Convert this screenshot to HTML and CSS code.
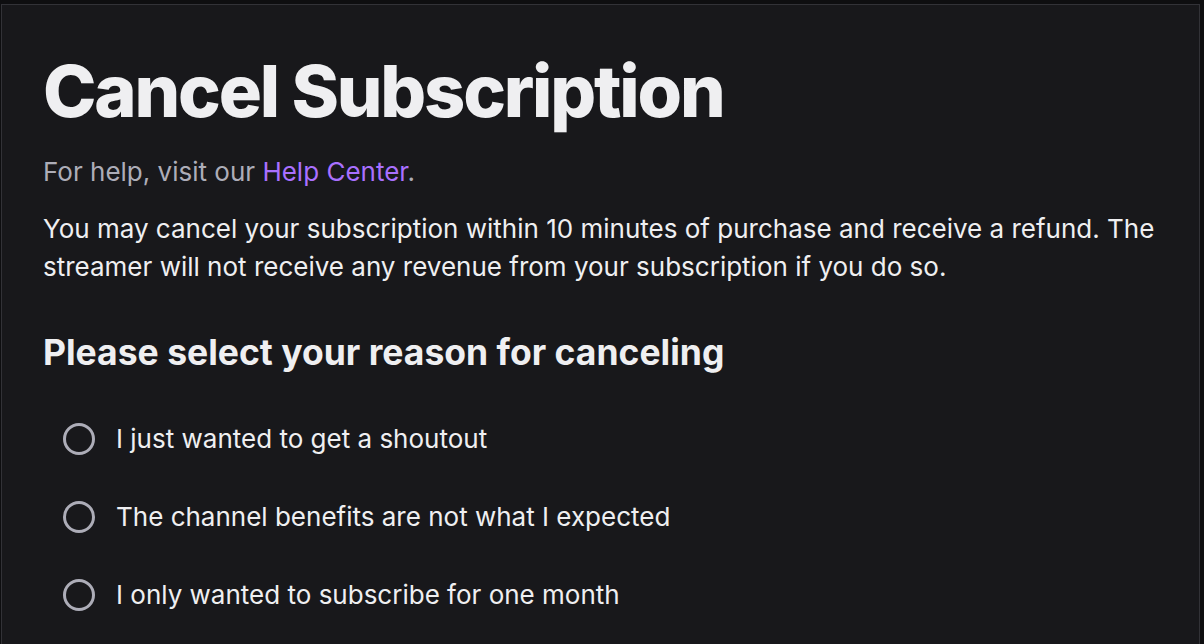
FILE: index.html
```html
<!DOCTYPE html>
<html lang="en">
<head>
<meta charset="utf-8">
<title>Cancel Subscription</title>
<link rel="stylesheet" href="styles.css">
</head>
<body>
<main class="panel">
  <h1 class="title">Cancel Subscription</h1>
  <p class="help">For help, visit our <a class="link" href="#">Help Center</a>.</p>
  <p class="info">You may cancel your subscription within 10 minutes of purchase and receive a refund. The streamer will not receive any revenue from your subscription if you do so.</p>
  <h2 class="subtitle">Please select your reason for canceling</h2>
  <ul class="options">
    <li class="option"><span class="radio"></span><span class="label">I just wanted to get a shoutout</span></li>
    <li class="option"><span class="radio"></span><span class="label">The channel benefits are not what I expected</span></li>
    <li class="option"><span class="radio"></span><span class="label">I only wanted to subscribe for one month</span></li>
  </ul>
</main>
</body>
</html>
```
FILE: styles.css
```css
html, body {
  margin: 0;
  padding: 0;
  height: 100%;
  background: #0e0e10;
  overflow: hidden;
}
body {
  font-family: Inter, "Noto Sans", sans-serif;
  color: #efeff1;
}
.panel {
  margin: 4px 4px 0 1px;
  min-height: 700px;
  background: #18181b;
  border: 1px solid #323237;
  border-bottom: none;
  padding: 40px 40px 0 41px;
  box-sizing: border-box;
}
.title {
  margin: 0;
  font-size: 72px;
  font-weight: 800;
  line-height: 92px;
  letter-spacing: -2.2px;
  color: #efeff1;
}
.help {
  margin: 17px 0 0;
  font-size: 26px;
  line-height: 36px;
  color: #adadb8;
}
.link {
  color: #a970ff;
  text-decoration: none;
}
.info {
  margin: 20px 0 0;
  font-size: 26px;
  line-height: 38px;
  color: #efeff1;
}
.subtitle {
  margin: 45px 0 0;
  font-size: 35.5px;
  font-weight: 700;
  line-height: 44px;
  color: #efeff1;
}
.options {
  list-style: none;
  margin: 48px 0 0;
  padding: 0 0 0 20px;
  display: flex;
  flex-direction: column;
  gap: 46px;
}
.option {
  display: flex;
  align-items: center;
  gap: 21px;
  height: 32px;
}
.radio {
  width: 32px;
  height: 32px;
  box-sizing: border-box;
  border: 3px solid #adadb8;
  border-radius: 50%;
  flex: none;
}
.label {
  font-size: 26px;
  line-height: 32px;
  color: #efeff1;
}
```
